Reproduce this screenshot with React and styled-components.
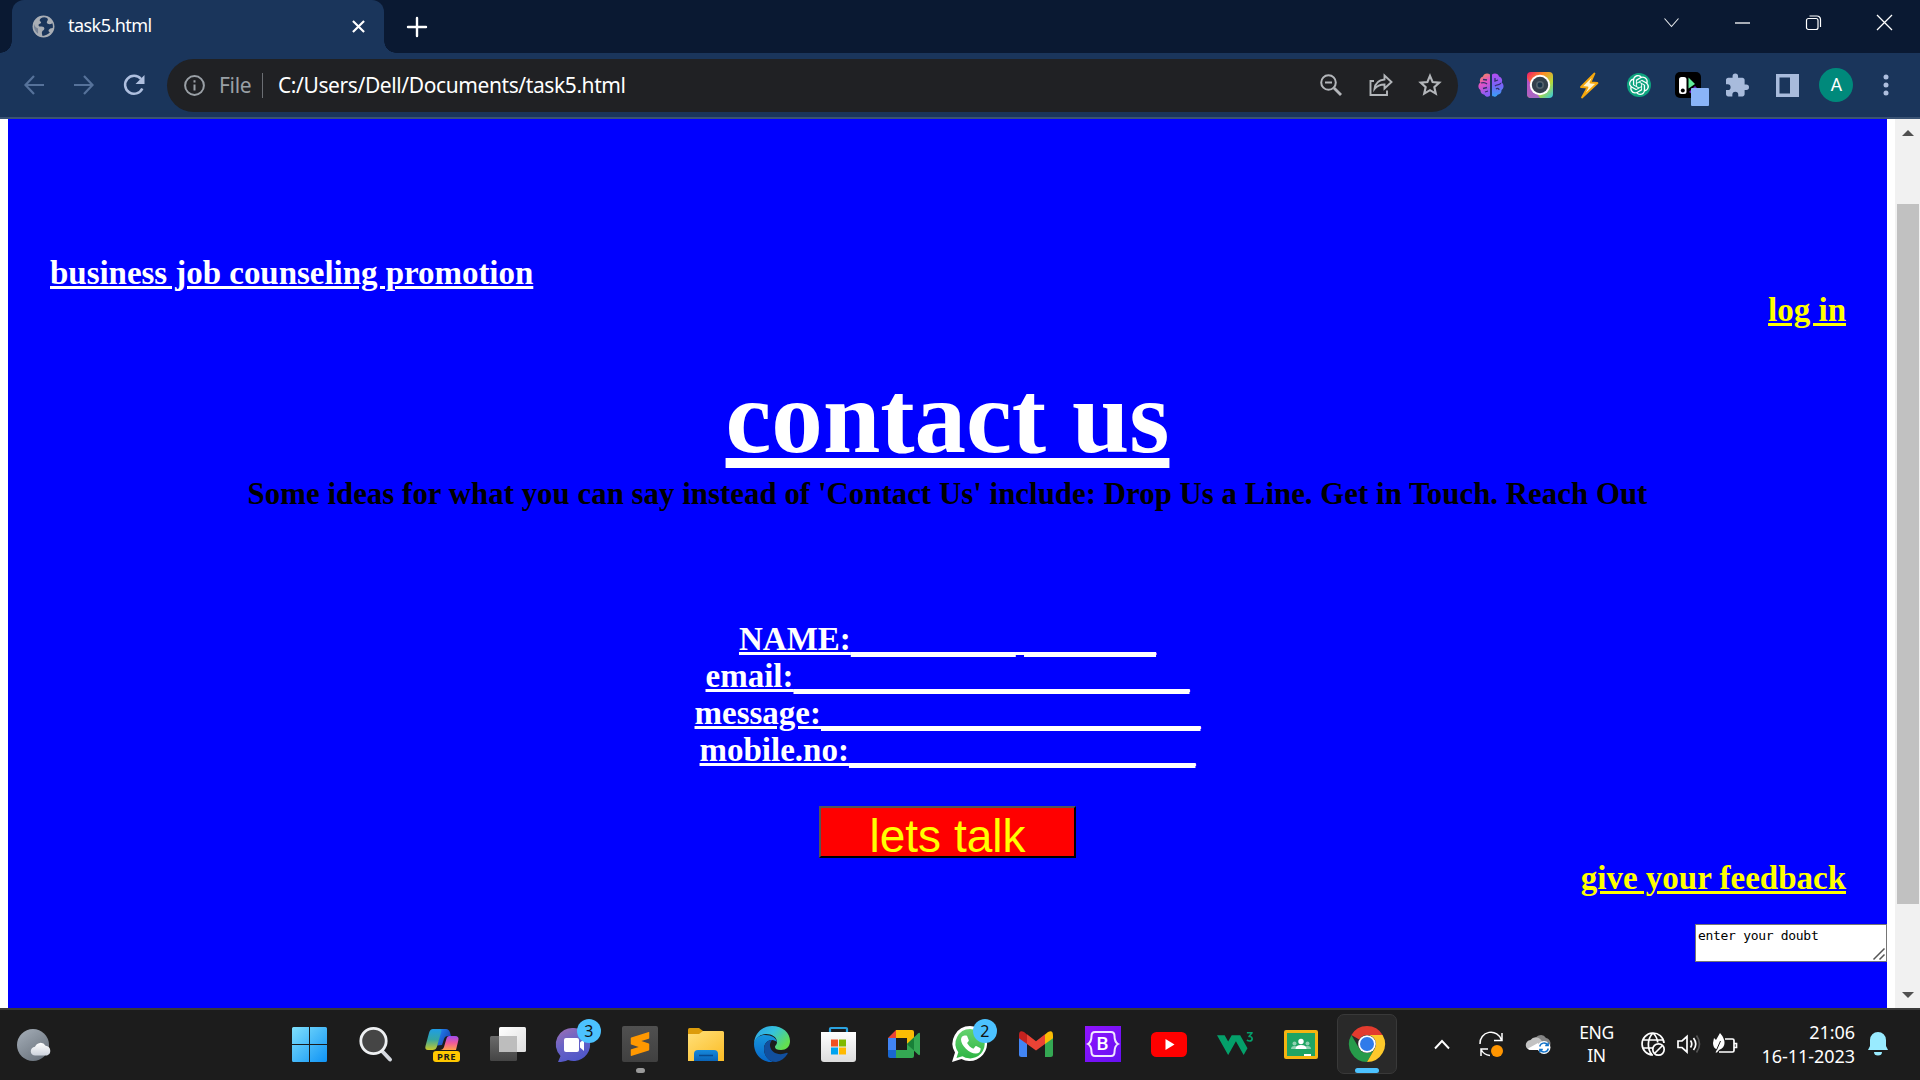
import React from "react";
import styled, { createGlobalStyle, css } from "styled-components";
import { SiOpenai, SiSublimetext, SiW3Schools } from "react-icons/si";

const ui = `"Noto Sans", "Open Sans", sans-serif`;
const serif = `"Liberation Serif", "Times New Roman", serif`;

const Global = createGlobalStyle`
  * { box-sizing: border-box; }
  html, body { margin: 0; padding: 0; overflow: hidden; background: #fff; }
  svg { display: block; flex: none; overflow: visible; }
`;

const Screen = styled.div`
  width: 1920px;
  height: 1080px;
  display: flex;
  flex-direction: column;
  font-family: ${ui};
  overflow: hidden;
`;

/* ---------- browser frame ---------- */

const TitleBar = styled.header`
  height: 53px;
  display: flex;
  align-items: stretch;
  padding-left: 12px;
  background: #0a1932;
`;

const Tab = styled.div`
  position: relative;
  width: 372px;
  display: flex;
  align-items: center;
  padding: 0 19px 1px 20px;
  border-radius: 12px 12px 0 0;
  background: #1a355b;
  color: #fff;
  &::before, &::after {
    content: "";
    position: absolute;
    bottom: 0;
    width: 12px;
    height: 12px;
  }
  &::before {
    left: -12px;
    background: radial-gradient(circle at 0 0, transparent 11.5px, #1a355b 12px);
  }
  &::after {
    right: -12px;
    background: radial-gradient(circle at 100% 0, transparent 11.5px, #1a355b 12px);
  }
`;

const TabTitle = styled.span`
  flex: 1;
  margin-left: 13px;
  padding-bottom: 2px;
  font-size: 18px;
  line-height: 24px;
  letter-spacing: -0.55px;
`;

const NewTab = styled.div`
  width: 66px;
  display: flex;
  align-items: center;
  justify-content: center;
`;

const WindowButtons = styled.div`
  margin-left: auto;
  display: flex;
  align-items: center;
  padding-bottom: 8px;
`;

const WindowButton = styled.div`
  width: 71px;
  display: flex;
  justify-content: center;
`;

const Toolbar = styled.nav`
  height: 66px;
  display: flex;
  align-items: center;
  padding: 0 9px 0 9px;
  background: #1a355b;
  border-bottom: 2px solid #3a5374;
`;

const Slot = styled.div`
  width: ${(p) => p.$w || 50}px;
  flex: none;
  display: flex;
  align-items: center;
  justify-content: center;
`;

const Extensions = styled.div`
  display: flex;
  align-items: center;
  ${Slot} { width: 49.4px; }
`;

const Omnibox = styled.div`
  width: 1291px;
  height: 53px;
  flex: none;
  margin-left: 8px;
  margin-right: 8px;
  display: flex;
  align-items: center;
  padding: 0 4px 0 17px;
  border-radius: 27px;
  background: #202124;
`;

const Scheme = styled.span`
  width: 43px;
  margin-left: 14px;
  font-size: 21px;
  line-height: 28px;
  letter-spacing: -0.3px;
  color: #9aa0a6;
`;

const Divider = styled.i`
  width: 1px;
  height: 25px;
  background: #6b6e73;
`;

const Address = styled.span`
  flex: 1;
  margin-left: 15px;
  font-size: 21px;
  line-height: 28px;
  letter-spacing: -0.4px;
  color: #fff;
`;

const Avatar = styled.div`
  width: 34px;
  height: 34px;
  border-radius: 50%;
  background: #00897b;
  color: #fff;
  font: 18px/34px Roboto, sans-serif;
  text-align: center;
`;

/* ---------- web page ---------- */

const Viewport = styled.div`
  height: 889px;
  display: flex;
`;

const Page = styled.main`
  width: 1879px;
  margin: 0 8px;
  padding-top: 136px;
  display: flex;
  flex-direction: column;
  align-items: center;
  background: #0000ff;
  font-family: ${serif};
  overflow: hidden;
`;

const line = css`
  font-size: 33px;
  line-height: 37px;
  font-weight: 700;
  white-space: pre;
  text-decoration-thickness: 3px;
  text-underline-offset: 2px;
`;

const Tagline = styled.u`
  ${line}
  align-self: flex-start;
  margin-left: 42px;
  letter-spacing: -0.035px;
  color: #fff;
`;

const YellowLink = styled.u`
  ${line}
  align-self: flex-end;
  margin-right: 41px;
  margin-top: ${(p) => p.$top || 0}px;
  color: #ffff00;
`;

const Heading = styled.h1`
  margin: 29px 0 0;
  font-size: 103.1px;
  line-height: 118px;
  font-weight: 700;
  color: #fff;
  text-decoration: underline;
`;

const Ideas = styled.p`
  margin: 1px 0 0;
  font-size: 30.8px;
  line-height: 35px;
  font-weight: 700;
  letter-spacing: 0.045px;
  white-space: nowrap;
  color: #000;
`;

const Form = styled.div`
  margin-top: 109px;
  display: flex;
  flex-direction: column;
  align-items: center;
`;

const Field = styled.u`
  ${line}
  color: #fff;
`;

const Blank = styled.span`
  text-decoration: underline;
  text-decoration-thickness: 5px;
  text-decoration-skip-ink: none;
  text-underline-offset: 2px;
`;

const TalkButton = styled.button`
  width: 257px;
  height: 52px;
  margin: 37px 0 0;
  padding: 7px 0 0;
  display: flex;
  align-items: center;
  justify-content: center;
  border: 2px solid;
  border-color: #555 #000 #000 #555;
  background: #ff0000;
  color: #ffff00;
  font: 46px/52px "Liberation Sans", Arial, sans-serif;
`;

const DoubtWrap = styled.div`
  position: relative;
  align-self: flex-end;
  margin-top: 27px;
  > svg { position: absolute; right: 2px; bottom: 2px; }
`;

const Doubt = styled.textarea`
  width: 192px;
  height: 38px;
  margin: 0;
  padding: 2px 2px;
  border: 1px solid #767676;
  border-radius: 0;
  background: #fff;
  color: #000;
  font: 13px/17px "DejaVu Sans Mono", monospace;
  letter-spacing: -0.3px;
  resize: none;
  overflow: hidden;
  display: block;
`;

const Scrollbar = styled.aside`
  width: 25px;
  display: flex;
  flex-direction: column;
  align-items: center;
  background: #f1f1f1;
`;

const ScrollArrow = styled.div`
  height: ${(p) => p.$h}px;
  display: flex;
  align-items: flex-start;
  padding-top: ${(p) => p.$top}px;
`;

const Thumb = styled.div`
  width: 22px;
  height: 700px;
  background: #c1c1c1;
`;

/* ---------- taskbar ---------- */

const Taskbar = styled.footer`
  height: 72px;
  display: flex;
  align-items: center;
  border-top: 2px solid #3a3a3a;
  background: #1c1c1c;
  color: #fff;
`;

const Weather = styled.div`
  width: 276.4px;
  padding-left: 17px;
`;

const Apps = styled.div`
  display: flex;
  height: 70px;
`;

const AppSlot = styled.div`
  position: relative;
  width: 66.1px;
  display: flex;
  align-items: center;
  justify-content: center;
  padding-bottom: 2px;
`;

const ActiveApp = styled.div`
  position: relative;
  width: 60px;
  height: 60px;
  display: flex;
  align-items: center;
  justify-content: center;
  border: 1px solid #393939;
  border-radius: 7px;
  background: #292929;
  &::after {
    content: "";
    position: absolute;
    bottom: 0;
    width: 24px;
    height: 5px;
    border-radius: 3px;
    background: #4cc2ff;
  }
`;

const Badge = styled.b`
  position: absolute;
  left: ${(p) => p.$x || 36}px;
  top: 9px;
  width: 24px;
  height: 24px;
  border-radius: 50%;
  background: #4cc2ff;
  color: #111;
  font: 400 16px/24px ${ui};
  text-align: center;
`;

const RunDot = styled.i`
  position: absolute;
  left: 29px;
  top: 58px;
  width: 9px;
  height: 5px;
  border-radius: 3px;
  background: #9a9a9a;
`;

const Pre = styled.b`
  position: absolute;
  left: 24.5px;
  top: 41px;
  width: 27px;
  height: 11px;
  border-radius: 3px;
  background: #ffc800;
  color: #1c1c1c;
  font: 700 9.5px/11px ${ui};
  letter-spacing: 0.5px;
  text-align: center;
`;

const Tile = styled.div`
  position: relative;
  width: 36px;
  height: 36px;
  display: flex;
  align-items: center;
  justify-content: center;
  border-radius: ${(p) => p.$r || 0}px;
  background: ${(p) => p.$bg};
  color: ${(p) => p.$fg};
`;

const CroppedMark = styled.div`
  height: 27px;
  overflow: hidden;
`;

const Brace = styled.span`
  font: 500 19px/36px Roboto, sans-serif;
  position: absolute;
`;

const Tray = styled.div`
  flex: 1;
  display: flex;
  align-items: center;
  padding-left: 15px;
  padding-bottom: 2px;
`;

const Lang = styled.div`
  width: 61px;
  text-align: center;
  font-size: 17.5px;
  line-height: 23px;
  letter-spacing: -0.4px;
`;

const Clock = styled.div`
  width: 104px;
  text-align: right;
  font-size: 18px;
  line-height: 24px;
  letter-spacing: -0.05px;
  white-space: nowrap;
`;

const Icon = ({ s = 24, w = s, h = s, vb = "0 0 24 24", children, ...rest }) => (
  <svg width={w} height={h} viewBox={vb} fill="none" {...rest}>{children}</svg>
);

const Grad = ({ id, stops, x2 = 0, y2 = 1 }) => (
  <linearGradient id={id} x1="0" y1="0" x2={x2} y2={y2}>
    {stops.map((c, i) => <stop key={i} offset={i / (stops.length - 1)} stopColor={c} />)}
  </linearGradient>
);

function BrowserTop() {
  return (
    <>
      <TitleBar>
        <Tab>
          <Icon s={23}>
            <circle cx="12" cy="12" r="11.4" fill="#a9aeb5" />
            <path d="M13 2.300C10 2.500 8 4 8 5.500c0 1.200 1.500 1.300 1.500 2.300 0 1.400-2.700 1-2.700 2.800 0 1.400 1.500 1.400 3.200 1.400 1.900 0 2.900.8 2.900 2.200 0 1.600-1.700 2-2.400 3.200-.5 1 0 2.500.5 4.400 3-.1 5.700-1.300 7.700-3.700-1.500-.5-1.700-1.500-1.200-2.600.6-1.300 2-1.700 4.200-2 .3-1.700.2-3.300-.4-5-1.300.8-2.700 1.300-4.200.9-1.800-.5-2-1.900-1.200-3.100.6-.9 1-1.500.4-2.500-.7-.9-1.800-1.400-3.300-1.500z" fill="#1a355b" />
            <path d="M2.300 9.500c.5 2.500 2 4 4 4.500v5.500A9.800 9.800 0 0 1 2.300 9.500z" fill="#1a355b" opacity=".35" />
          </Icon>
          <TabTitle>task5.html</TabTitle>
          <Icon s={13} vb="0 0 14 14" stroke="#fff" strokeWidth="2.300"><path d="m1 1 12 12M13 1 1 13" /></Icon>
        </Tab>
        <NewTab>
          <Icon s={18} vb="0 0 18 18" stroke="#fff" strokeWidth="2.400" strokeLinecap="round"><path d="M9 0v18M0 9h18" /></Icon>
        </NewTab>
        <WindowButtons>
          <WindowButton><Icon w={15} h={9} vb="0 0 15 9" stroke="#e8eaed" strokeWidth="1.100"><path d="m.5.5 7 8 7-8" /></Icon></WindowButton>
          <WindowButton><Icon w={15} h={2} vb="0 0 15 2" stroke="#fff" strokeWidth="1.300"><path d="M0 1h15" /></Icon></WindowButton>
          <WindowButton><Icon s={15} vb="0 0 15 15" stroke="#fff" strokeWidth="1.200"><rect x=".5" y="3.500" width="11.500" height="11" rx="2" /><path d="M3.500 1h7.500a3.500 3.500 0 0 1 3.500 3.500V12" /></Icon></WindowButton>
          <WindowButton><Icon s={15} vb="0 0 15 15" stroke="#fff" strokeWidth="1.300"><path d="m0 0 15 15M15 0 0 15" /></Icon></WindowButton>
        </WindowButtons>
      </TitleBar>
      <Toolbar>
        <Slot><Icon s={20} vb="0 0 20 20" stroke="#56729a" strokeWidth="2.200"><path d="M20 10H1.500M10 1 1.500 10l8.500 9" /></Icon></Slot>
        <Slot $w={49}><Icon s={20} vb="0 0 20 20" stroke="#56729a" strokeWidth="2.200"><path d="M0 10h18.500M10 1l8.500 9-8.500 9" /></Icon></Slot>
        <Slot $w={51}><Icon s={22} vb="0 0 22 22"><path d="M19.300 14.500A9 9 0 1 1 18 5" stroke="#aebfdf" strokeWidth="2.500" /><path d="M21.500 1v9h-9z" fill="#aebfdf" /></Icon></Slot>
        <Omnibox>
          <Icon s={21} vb="0 0 21 21" stroke="#9aa0a6" strokeWidth="2"><circle cx="10.500" cy="10.500" r="9.400" /><path d="M10.500 9.500v6M10.500 5.300v2.200" /></Icon>
          <Scheme>File</Scheme>
          <Divider />
          <Address>C:/Users/Dell/Documents/task5.html</Address>
          <Slot><Icon s={22} vb="0 0 22 22" stroke="#b3b6ba" strokeWidth="2"><circle cx="8.500" cy="8.500" r="7.300" /><path d="m14 14 7 7" strokeWidth="2.800" /><path d="M5 8.500h7" /></Icon></Slot>
          <Slot><Icon s={24} stroke="#b3b6ba" strokeWidth="1.900"><path d="M5 8H1.500v14H18v-4.500" /><path d="M15.500 2.500 22.500 9l-7 6.500v-4c-4.500 0-7.500 1.300-10 4.500.6-5 4-9 10-9.500z" /></Icon></Slot>
          <Slot $w={48}><Icon s={24} stroke="#b3b6ba" strokeWidth="2.100"><path d="m12 2.800 2.600 6.200 6.700.6-5 4.500 1.500 6.600-5.800-3.500-5.800 3.500 1.500-6.600-5-4.500 6.700-.6z" /></Icon></Slot>
        </Omnibox>
        <Extensions>
          <Slot>
            <Icon w={26} h={24} vb="0 0 26 24">
              <defs><Grad id="brainL" x2={0.3} stops={["#f79a3c", "#e252c6", "#8a5cf5"]} /><Grad id="brainR" stops={["#b44df2", "#7a62f8", "#37a0f5"]} /></defs>
              <path d="M12 1.500C9.500-.6 5.500.6 5 3.500 2 4.500 1.200 7.500 2.400 9.500-.4 11.500 0 15.500 2.400 17c0 3 2 4.500 4 4.700C8 24.500 11 24 12 22.500z" fill="url(#brainL)" />
              <path d="M14 1.500c2.500-2.100 6.500-.9 7 2 3 1 3.800 4 2.600 6 2.800 2 2.400 6 0 7.500 0 3-2 4.500-4 4.700-1.600 2.800-4.600 2.300-5.600.8z" fill="url(#brainR)" />
              <path d="M5 6.500 9 7M3 10c3-1 5 0 6 1M5 15.500l4-1M7 19l3-1M17 5v3l3-1M23 10c-2 3-4 1-6 3M21 17c0-2-2-2-3-1" stroke="#33306e" strokeWidth="1.300" />
            </Icon>
          </Slot>
          <Slot>
            <Icon s={26} vb="0 0 26 26">
              <defs><Grad id="cam" x2={1} stops={["#f0146e", "#ff8a25", "#b5d93a", "#2dc8e8"]} /></defs>
              <rect width="26" height="26" rx="4" fill="url(#cam)" /><path d="M0 6v16a4 4 0 0 0 4 4h9z" fill="#a34fe8" opacity=".8" />
              <circle cx="13" cy="13" r="10.200" fill="#fff" /><circle cx="13" cy="13" r="8.200" fill="#34404c" /><circle cx="13" cy="13" r="4" fill="#53616c" /><circle cx="13" cy="13" r="2.400" fill="#193247" />
            </Icon>
          </Slot>
          <Slot>
            <Icon w={18} h={25} vb="0 0 18 25"><path d="M14.500.5 1 14l6.500.5L2 24.500 17.500 10l-7-.5z" fill="#fff4cf" stroke="#f5a70d" strokeWidth="1.800" strokeLinejoin="round" /></Icon>
          </Slot>
          <Slot><Icon s={24}><circle cx="12" cy="12" r="12" fill="#0ea37f" /><SiOpenai x="2" y="2" width="20" height="20" size={20} color="#fff" /></Icon></Slot>
          <Slot>
            <Icon s={26} vb="0 0 26 26">
              <rect width="26" height="26" rx="5" fill="#000" /><rect x="4" y="5" width="7.500" height="17" rx="2.500" fill="#fff" /><circle cx="7.800" cy="18.500" r="2" fill="#000" />
              <path d="M13.500 5.500 20 12l-6.500 4.500z" fill="#60ed9a" /><path d="m14 20 6-6 3 3-6 5z" fill="#6d22c7" /><rect x="16" y="16" width="18" height="18" rx="1" fill="#8ab4f8" />
            </Icon>
          </Slot>
          <Slot><Icon s={23} vb="2 1.500 21 21"><path d="M20.500 11H19V7c0-1.100-.9-2-2-2h-4V3.500a2.500 2.500 0 0 0-5 0V5H4c-1.100 0-2 .9-2 2v3.800h1.500a2.700 2.700 0 0 1 0 5.400H2V20c0 1.100.9 2 2 2h3.800v-1.500a2.700 2.700 0 0 1 5.400 0V22H17c1.100 0 2-.9 2-2v-4h1.500a2.500 2.500 0 0 0 0-5z" fill="#a8bbdc" /></Icon></Slot>
          <Slot><Icon w={23} h={23} vb="0 0 23 23"><path fillRule="evenodd" d="M0 0h23v23H0zM3.500 3.500v16H14v-16z" fill="#a8bbdc" /></Icon></Slot>
          <Slot><Avatar>A</Avatar></Slot>
          <Slot><Icon w={6} h={22} vb="0 0 6 22"><g fill="#aebfdf"><circle cx="3" cy="3" r="2.500" /><circle cx="3" cy="11" r="2.500" /><circle cx="3" cy="19" r="2.500" /></g></Icon></Slot>
        </Extensions>
      </Toolbar>
    </>
  );
}

const fields = [
  { label: "NAME:", blanks: [10, 8] },
  { label: "email:", blanks: [24] },
  { label: "message:", blanks: [23] },
  { label: "mobile.no:", blanks: [21] },
];

function WebPage() {
  return (
    <Viewport>
      <Page>
        <Tagline>business job counseling promotion</Tagline>
        <YellowLink>log in</YellowLink>
        <Heading>contact us</Heading>
        <Ideas>Some ideas for what you can say instead of 'Contact Us' include: Drop Us a Line. Get in Touch. Reach Out</Ideas>
        <Form>
          {fields.map((f) => (
            <Field key={f.label}>
              {f.label}
              {f.blanks.map((n, i) => (
                <React.Fragment key={i}>
                  {i > 0 && " "}
                  <Blank>{"_".repeat(n)}</Blank>
                </React.Fragment>
              ))}
            </Field>
          ))}
        </Form>
        <TalkButton>lets talk</TalkButton>
        <YellowLink $top={2}>give your feedback</YellowLink>
        <DoubtWrap>
          <Doubt defaultValue="enter your doubt" />
          <Icon s={12} vb="0 0 12 12" stroke="#555" strokeWidth="1.500"><path d="M.5 11.500 11.500.5M6.500 11.500l5-5" /></Icon>
        </DoubtWrap>
      </Page>
      <Scrollbar>
        <ScrollArrow $h={85} $top={11}><Icon w={12} h={6} vb="0 0 12 6"><path d="M0 6 6 0l6 6z" fill="#505050" /></Icon></ScrollArrow>
        <Thumb />
        <ScrollArrow $h={104} $top={88}><Icon w={12} h={6} vb="0 0 12 6"><path d="M0 0h12L6 6z" fill="#505050" /></Icon></ScrollArrow>
      </Scrollbar>
    </Viewport>
  );
}

const CloudPath = "M8 20a6 6 0 0 1-.5-12A8 8 0 0 1 22 6.500 7 7 0 0 1 24 20z";

function TaskbarRow() {
  return (
    <Taskbar>
      <Weather>
        <Icon w={35} h={33} vb="0 0 35 33">
          <defs><Grad id="moon" x2={0.7} stops={["#a6afb9", "#6b747e"]} /><Grad id="cl" stops={["#ffffff", "#cdd3dc"]} /></defs>
          <circle cx="16" cy="16" r="16" fill="url(#moon)" />
          <path d={CloudPath} transform="translate(12.500 12) scale(.73)" fill="url(#cl)" />
        </Icon>
      </Weather>
      <Apps>
        <AppSlot>
          <Icon s={35} vb="0 0 35 35"><defs><linearGradient id="win" gradientUnits="userSpaceOnUse" x1="0" y1="0" x2="35" y2="35"><stop stopColor="#7fe0fc" /><stop offset="1" stopColor="#0f93f5" /></linearGradient></defs><path d="M0 1.500Q0 0 1.500 0H17v17H0zM18 0h15.500Q35 0 35 1.500V17H18zM0 18h17v17H1.500Q0 35 0 33.500zM18 18h17v15.500q0 1.500-1.500 1.500H18z" fill="url(#win)" /></Icon>
        </AppSlot>
        <AppSlot>
          <Icon w={33} h={34} vb="0 0 33 34"><path d="m23 24 8 8.500" stroke="#d5d9df" strokeWidth="4" strokeLinecap="round" /><circle cx="14.500" cy="14" r="12.700" fill="#454545" stroke="#eef0f2" strokeWidth="2.800" /></Icon>
        </AppSlot>
        <AppSlot>
          <Icon w={34} h={33} vb="0 0 34 33">
            <defs><Grad id="cpA" stops={["#1e9de8", "#35a6a2", "#c9c92a"]} /><Grad id="cpB" stops={["#a04df0", "#ef5a9a", "#ffa24a"]} /><Grad id="cpC" x2={1} y2={0.5} stops={["#35c3f5", "#1e6fe0", "#1a46b0"]} /></defs>
            <path d="M8 1h13q3 0 4 3.500L26 8h-3q-3 0-4 3l-2 6-5 .5 3-13z" fill="url(#cpC)" />
            <path d="M8 1h6q3 0 2 3.500l-4 14Q11 22 7.500 22H3q-3.500 0-2.500-4L4 5q1-4 4-4z" fill="url(#cpA)" />
            <path d="M24 8h6q4.500 0 3.300 4.500L31 22H15q3 0 4-3l2.500-8.500Q22 8 24 8z" fill="url(#cpB)" />
          </Icon>
          <Pre>PRE</Pre>
        </AppSlot>
        <AppSlot>
          <Icon w={36} h={34} vb="0 0 36 34"><defs><Grad id="tv" x2={1} stops={["#ffffff", "#dedede"]} /><Grad id="tg" stops={["#6a6a6a", "#454545"]} /></defs><rect y="9" width="27" height="25" rx="1.500" fill="url(#tg)" /><rect x="9" width="27" height="25" rx="1.500" fill="url(#tv)" /><path d="M9 9h18v16H9z" fill="#bdbdbd" /></Icon>
        </AppSlot>
        <AppSlot>
          <Icon w={34} h={35} vb="0 0 34 35"><defs><Grad id="chat" x2={0.5} stops={["#a06fb2", "#6a63c6", "#5057c8"]} /></defs><path d="M17 1a16.500 16.500 0 1 1-6 32c-3 1.500-6 2-10 2l2.500-6A16.500 16.500 0 0 1 17 1z" fill="url(#chat)" /><rect x="7" y="11" width="15" height="14" rx="2" fill="#fff" /><path d="M23 15.500 27 12v12l-4-3.500z" fill="#fff" /></Icon>
          <Badge>3</Badge>
        </AppSlot>
        <AppSlot><Tile $bg="linear-gradient(#505050,#404040)" $fg="#ff9800" $r={2}><SiSublimetext size={24} /></Tile><RunDot /></AppSlot>
        <AppSlot>
          <Icon w={36} h={33} vb="0 0 36 33"><defs><Grad id="fol" x2={0.8} stops={["#ffe07a", "#fcbf2b"]} /><Grad id="fb" stops={["#1689dc", "#0a64b8"]} /></defs><path d="M0 1.500Q0 0 1.500 0H11l4 3v5H0z" fill="#dc9c0b" /><path d="M0 6h11l4-3h19.500Q36 3 36 4.500V33H0z" fill="url(#fol)" /><path d="M6 33v-7q0-4 4-4h16q4 0 4 4v7z" fill="url(#fb)" /><path d="M11 27.500h14" stroke="#084a8f" strokeWidth="1.500" /></Icon>
        </AppSlot>
        <AppSlot>
          <Icon s={36} vb="0 0 36 36"><defs><Grad id="eg" x2={1} y2={0.6} stops={["#2b9fe8", "#35c2dc", "#63e04f"]} /><Grad id="eb" stops={["#1795dc", "#0766c8"]} /></defs>
            <path d="M0 17C1 7 8 0 18 0c11 0 18 7 18 15 0 6-4 9-9 9-4 0-6-1.300-6-3 0-1.500 2-2 2-5C23 11 18 8 12 8 6 8 2 12 0 17z" fill="url(#eg)" />
            <path d="M0 18c0-5 5-9 11-9 7 0 11 3 12 7-1-1-3-2-5-2-5 0-8 4-8 9 0 6 4 11 9 13C9 37 0 29 0 18z" fill="url(#eb)" />
            <path d="M18 14c-5 0-8 4-8 9 0 7 5 13 12 13 5-1 9-4 11.500-8 .5-1-.3-1.500-1.200-1C25 30 17 27 16 20c-.3-2 .5-4 2-6z" fill="#114f9e" />
          </Icon>
        </AppSlot>
        <AppSlot>
          <Icon w={35} h={35} vb="0 0 35 35"><defs><Grad id="st" stops={["#ffffff", "#dcdcdc"]} /></defs><path d="M9 7V1.800Q9 1 10 1h15q1 0 1 .8V7" stroke="#2ba3e0" strokeWidth="2.200" /><path d="M0 5h35v27q0 3-3 3H3q-3 0-3-3z" fill="url(#st)" /><path d="M10 12.500h7v7h-7z" fill="#f25022" /><path d="M18 12.500h7v7h-7z" fill="#7fba00" /><path d="M10 20.500h7v7h-7z" fill="#00a4ef" /><path d="M18 20.500h7v7h-7z" fill="#ffb900" /></Icon>
        </AppSlot>
        <AppSlot>
          <Icon w={33} h={28} vb="0 0 33 28"><path d="M8 0v8H0z" fill="#ea4335" /><path d="M0 8h8v12H0z" fill="#4285f4" /><path d="M0 20h8v8H2q-2 0-2-2z" fill="#1967d2" /><path d="M8 0h16q2 0 2 2v7l-7 6V8H8z" fill="#fbbc04" /><path d="M8 20h11v-6l7 6v6q0 2-2 2H8z" fill="#34a853" /><path d="m19 14 11-10.500Q32 2 32 4v20q0 2-2 .5z" fill="#34a853" /><path d="m19 14 7-6.500v13z" fill="#188038" /></Icon>
        </AppSlot>
        <AppSlot>
          <Icon s={36} vb="0 0 36 36"><defs><Grad id="wa" stops={["#65d36e", "#2fb545"]} /></defs><path d="M18 0a17.500 17.500 0 1 1-8.500 33L0 36l3-9.500A17.500 17.500 0 0 1 18 0z" fill="#fff" /><path d="M18 3a14.700 14.700 0 1 1-7.500 27.300L4.500 32l1.800-5.700A14.700 14.700 0 0 1 18 3z" fill="url(#wa)" /><path d="M12.500 9.500h1.700c.5 0 .8.300 1 .8l1.500 3.600c.2.500.1.900-.2 1.300l-1.400 1.700c1.500 2.700 3.500 4.500 6.300 5.800l1.900-2.200c.4-.5.8-.5 1.300-.3l3.500 1.700c.5.200.7.500.6 1-.2 3-2.300 4.500-4.700 4.600-6.500.2-15-8-15-14 0-1.700 1.300-4 3.500-4z" fill="#fff" /></Icon>
          <Badge $x={35.5}>2</Badge>
        </AppSlot>
        <AppSlot>
          <Icon w={34} h={26} vb="0 0 34 26"><path d="M0 5l8 6v15H2.500Q0 26 0 23.500z" fill="#4285f4" /><path d="M34 5l-8 6v15h5.500q2.500 0 2.500-2.500z" fill="#34a853" /><path d="M26 3.500 29 1q5-2.500 5 3.500v2.800L26 13z" fill="#fbbc04" /><path d="M0 7.300V4Q0-1.500 5 1l3 2.500V13z" fill="#c5221f" /><path d="m8 3.300 9 7 9-7V13l-9 6.500L8 13z" fill="#ea4335" /></Icon>
        </AppSlot>
        <AppSlot>
          <Tile $bg="linear-gradient(135deg,#9013fe,#6610f2)" $fg="#fff"><Brace>B</Brace><Icon w={32} h={26} vb="0 0 32 26" stroke="#f0e6ff" strokeWidth="2"><path d="M8 1h16q3.500 0 3.500 4 0 6 3.500 8-3.500 2-3.500 8 0 4-3.500 4H8q-3.500 0-3.500-4 0-6-3.500-8 3.500-2 3.500-8 0-4 3.500-4z" /></Icon></Tile>
        </AppSlot>
        <AppSlot>
          <Icon w={36} h={25} vb="0 0 36 25"><rect width="36" height="25" rx="5.500" fill="#f00" /><path d="m14.500 7 9 5.500-9 5.500z" fill="#fff" /></Icon>
        </AppSlot>
        <AppSlot><CroppedMark><SiW3Schools size={36} color="#04a06a" /></CroppedMark></AppSlot>
        <AppSlot>
          <Icon w={34} h={29} vb="0 0 34 29"><rect width="34" height="29" rx="2" fill="#f4b411" /><path d="M3 3h28v23H3z" fill="#1fa463" /><g fill="#8fd1b1"><circle cx="10.500" cy="13.500" r="2" /><circle cx="23.500" cy="13.500" r="2" /><path d="M7 19q0-3 3.500-3t3.500 3zM20 19q0-3 3.500-3t3.500 3z" /></g><g fill="#fff"><circle cx="17" cy="11.500" r="2.700" /><path d="M11.500 19q0-4 5.500-4t5.500 4z" /><path d="M20 24h7v2h-7z" /></g></Icon>
        </AppSlot>
        <AppSlot>
          <ActiveApp>
            <Icon s={36} vb="0 0 36 36"><path d="M2.400 9A18 18 0 0 1 33.600 9H18a9 9 0 0 0-7.800 4.500z" fill="#e33b2e" /><path d="M2.400 9A18 18 0 0 0 18 36l7.800-13.500A9 9 0 0 1 10.200 22.500z" fill="#269b4a" /><path d="M33.600 9A18 18 0 0 1 18 36l7.800-13.500A9 9 0 0 0 18 9z" fill="#fdc92b" /><circle cx="18" cy="18" r="8.800" fill="#fff" /><circle cx="18" cy="18" r="7" fill="#2f7bea" /></Icon>
          </ActiveApp>
        </AppSlot>
      </Apps>
      <Tray>
        <Slot $w={55}><Icon w={16} h={9} vb="0 0 16 9" stroke="#fff" strokeWidth="1.900"><path d="m1 8.500 7-7.500 7 7.500" /></Icon></Slot>
        <Slot $w={42}><Icon w={24} h={25} vb="0 0 24 25" stroke="#fff" strokeWidth="1.500"><path d="M1 12A11 11 0 0 1 22.500 8M23 1v7.500h-8M2 24v-7h7M2 17.500Q5 23 11 23.500" /><circle cx="18" cy="19" r="6" fill="#ff9500" stroke="none" /></Icon></Slot>
        <Slot $w={54}><Icon w={25} h={20} vb="0 0 25 20"><path d="M9 6a6 6 0 0 1 11-2 5.500 5.500 0 0 1 2 10H10z" fill="#858585" /><path d="M5 16a5 5 0 0 1-.5-10A6.500 6.500 0 0 1 16 8l-4 8z" fill="#c2c2c2" /><path d="M2 14.500 12 9l4 7H5q-2 0-3-1.500z" fill="#fff" /><circle cx="18" cy="13.500" r="6.500" fill="#fff" /><path d="M13.700 12.500a4.400 4.400 0 0 1 8-1.500M22.300 14.500a4.400 4.400 0 0 1-8 1.500M22.200 8.500v3h-3M13.800 18.500v-3h3" stroke="#1473c8" strokeWidth="1.400" /></Icon></Slot>
        <Lang>ENG<br />IN</Lang>
        <Slot $w={52}><Icon s={24} stroke="#fff" strokeWidth="1.700"><path d="M12 23A11 11 0 1 1 23 11M12 1C6 7 6 17 11 23M12 1c3 3 4.500 6 4.700 9.500M2 8h20M2 16h10" /><circle cx="17.500" cy="17.500" r="5.700" /><path d="m13.500 21.500 8-8" /></Icon></Slot>
        <Slot $w={20}><Icon w={24} h={20} vb="0 0 24 20" stroke="#fff" strokeWidth="1.700"><path d="M1 7v6.500h4l5 4.500V2.500L5 7zM13.500 6.500q2.500 3.500 0 7M16.500 4q4.500 6 0 12" /><path d="M19.500 1.500q6 8.500 0 17" stroke="#555" /></Icon></Slot>
        <Slot $w={52}><Icon w={24} h={22} vb="0 0 24 22"><path d="M12 6h7.500Q21 6 21 7.500v10q0 1.500-1.500 1.500H6M21 10.500h2.500v4H21" stroke="#fff" strokeWidth="1.700" /><path d="M7 0q4.500 5 4.500 10T6 17l-2 2.500H2.500L4 16.500Q0 15 0 10l1-5 2 2z" fill="#fff" /><path d="m3.500 17 4-9" stroke="#1c1c1c" strokeWidth="1" /></Icon></Slot>
        <Clock>21:06<br />16-11-2023</Clock>
        <Slot $w={46}><Icon w={20} h={24} vb="0 0 20 24"><path d="M10 0a8 8 0 0 1 8 8v6l2 4H0l2-4V8a8 8 0 0 1 8-8zM6 20h8a4 3.500 0 0 1-8 0z" fill="#99ebff" /></Icon></Slot>
      </Tray>
    </Taskbar>
  );
}

export default function App() {
  return (
    <Screen>
      <Global />
      <BrowserTop />
      <WebPage />
      <TaskbarRow />
    </Screen>
  );
}
